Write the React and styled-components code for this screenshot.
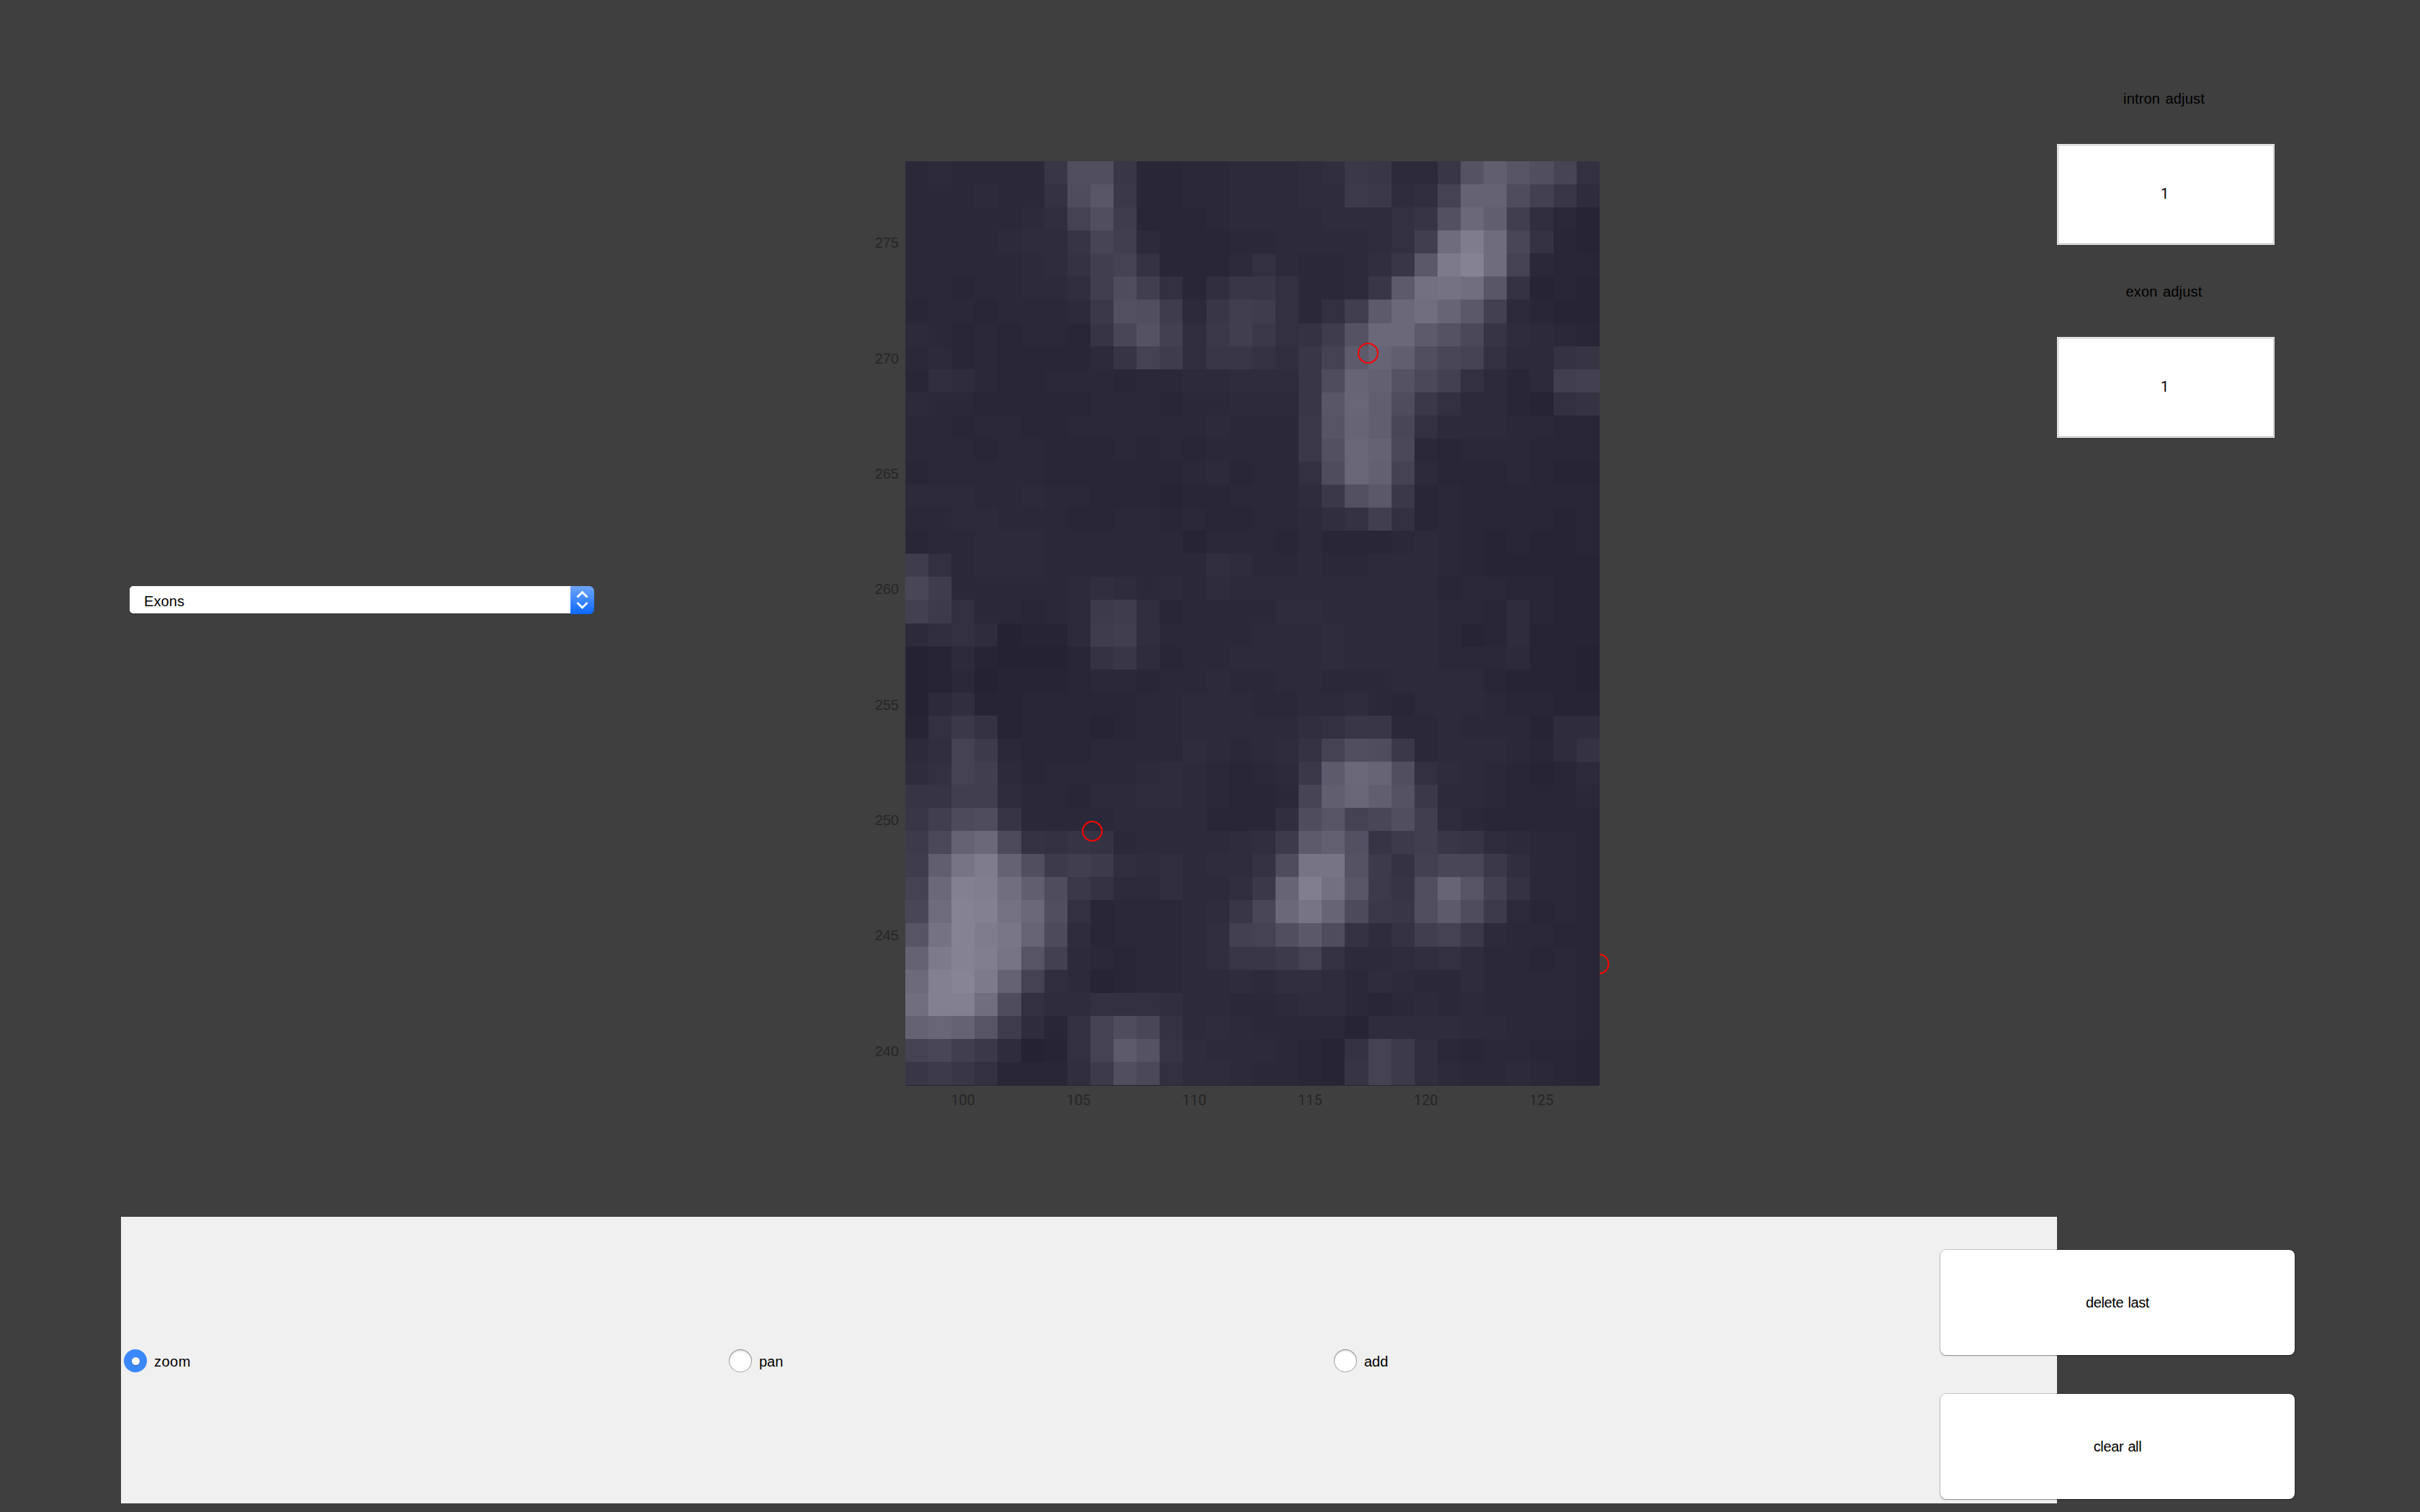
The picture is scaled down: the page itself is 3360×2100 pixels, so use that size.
import React from "react";
import styled, { createGlobalStyle } from "styled-components";

const GlobalStyle = createGlobalStyle`
  *, *::before, *::after { box-sizing: border-box; }
  body { margin: 0; background: #3f3f3f; }
`;

const Page = styled.main`
  display: flex;
  flex-direction: column;
  width: 3360px;
  height: 2100px;
  overflow: hidden;
  background: #3f3f3f;
  color: #000;
  font-family: "Liberation Sans", Arial, sans-serif;
  font-size: 20px;
  line-height: 24px;
`;

const Workspace = styled.section`
  display: flex;
  height: 1690px;
  flex: none;
`;

const SelectorColumn = styled.div`
  width: 1200px;
  flex: none;
  padding: 814px 0 0 180px;
`;

const Dropdown = styled.button`
  display: flex;
  width: 645px;
  height: 39px;
  padding: 0;
  border: 0;
  background: none;
  color: #000;
  font: inherit;
  text-align: left;
`;

const DropdownValue = styled.span`
  flex: 1;
  height: 38px;
  padding: 9px 0 0 20px;
  border-radius: 5px 0 0 5px;
  background: #fff;
  box-shadow: 0 1px 1px rgba(0, 0, 0, 0.35);
  letter-spacing: 0.1px;
`;

const DropdownArrows = styled.span`
  display: flex;
  align-items: center;
  justify-content: center;
  width: 33px;
  height: 39px;
  border-radius: 0 7px 7px 0;
  background: linear-gradient(#6ea5fb, #0b68ff);
`;

const PlotColumn = styled.div`
  display: grid;
  grid-template-columns: 57px 964px;
  grid-template-rows: 1284px auto;
  align-content: start;
  width: 1656px;
  flex: none;
  padding-top: 224px;
  color: #262626;
`;

const YTicks = styled.div`
  display: flex;
  flex-direction: column;
  padding: 33px 9px 0 0;
  height: 1284px;
`;

const YTick = styled.div`
  display: flex;
  align-items: center;
  justify-content: flex-end;
  height: 160.375px;
  flex: none;
`;

const XTicks = styled.div`
  display: flex;
  grid-column: 2;
  padding-top: 8px;
`;

const XTick = styled.div`
  flex: 1;
  padding-right: 1px;
  text-align: center;
  font-family: Roboto, "Liberation Sans", sans-serif;
`;

const PlotSvg = styled.svg`
  display: block;
  overflow: visible;
`;

const AdjustColumn = styled.div`
  display: flex;
  flex-direction: column;
  width: 302px;
  padding-top: 125px;
`;

const AdjustGroup = styled.label`
  display: flex;
  flex-direction: column;
  align-items: stretch;
  gap: 51px;
  margin-bottom: 53px;
`;

const AdjustLabel = styled.span`
  padding-right: 5px;
  text-align: center;
  letter-spacing: 0.18px;
  word-spacing: 1.6px;
  white-space: nowrap;
`;

const AdjustField = styled.span`
  display: flex;
  align-items: center;
  justify-content: center;
  height: 140px;
  padding: 0 3px 2px 0;
  border: 1px solid #fff;
  background: #fff;
  box-shadow: inset 0 0 0 1px #bdbdbd;
  font-family: Roboto, "Liberation Sans", sans-serif;
`;

const ControlBar = styled.section`
  display: flex;
  height: 398px;
  padding-left: 168px;
`;

const ModePanel = styled.div`
  display: flex;
  width: 2688px;
  flex: none;
  padding: 1px 0 0 4px;
  background: #f0f0f0;
`;

const ModeOption = styled.label`
  display: flex;
  align-items: center;
  gap: 10px;
  width: 840px;
  height: 398px;
`;

const Radio = styled.span`
  display: flex;
  align-items: center;
  justify-content: center;
  width: 32px;
  height: 32px;
  border-radius: 50%;
  background: ${(p) => (p.$on ? "#3b88fd" : "#fff")};
  box-shadow: ${(p) =>
    p.$on ? "none" : "inset 0 0 0 1px rgba(0,0,0,.3), inset 0 2px 3px rgba(0,0,0,.2)"};

  &::after {
    content: "";
    display: ${(p) => (p.$on ? "block" : "none")};
    width: 11px;
    height: 11px;
    border-radius: 50%;
    background: #fff;
    box-shadow: 0 1px 2px rgba(0, 0, 0, 0.3);
  }
`;

const ModeText = styled.span`
  padding-top: 2px;
  letter-spacing: ${(p) => p.$track}px;
`;

const Actions = styled.div`
  position: relative;
  display: flex;
  flex-direction: column;
  gap: 54px;
  width: 492px;
  flex: none;
  margin-left: -162px;
  padding-top: 46px;
`;

const ActionButton = styled.button`
  width: 492px;
  height: 146px;
  padding: 0;
  border: 0;
  border-radius: 8px;
  background: #fff;
  color: #000;
  font: inherit;
  letter-spacing: -0.38px;
  word-spacing: 1px;
  box-shadow: 0 0 0 1px rgba(0, 0, 0, 0.16), 0 1px 2px rgba(0, 0, 0, 0.32);
`;

/* Intensity of each sample, one character per sample, top row first. */
const LEVELS = [
  "454444bnnb334455567cb55bpvqni8",
  "4445449mrc334455566dc67hxxmgb6",
  "4444457hne333455556668aoAvf742",
  "4444566aif533344555568fCKCj932",
  "44444569fh93335854457bsJNCh433",
  "44344557fmf837bb8445btEFDr9232",
  "34434445cone5bfe848ftADysg5322",
  "54343443ajpg7cfc89epAAtpka6543",
  "453433335ahe7bb97bhtyvnjh8559a",
  "37643344434455666bmywpkg8535fg",
  "54433333444344555brzvmc8553289",
  "44344334444445444cqyvj85554433",
  "44434433343434444cozxk43444333",
  "344444333333453448mzwh53334322",
  "555445443332334446cosc34333333",
  "44554443344343344579f834333323",
  "344555444444244435333454323223",
  "e84555444444476445445554322222",
  "je4444457645465555555553443322",
  "gd844345de73444466555554436322",
  "57861225ef74444555655554236222",
  "125211139b63445555655554445221",
  "124122234434454455444555532221",
  "157223333344555445564355543322",
  "28c9233323445555578bb445444266",
  "57hd43334444654569hnmc45554369",
  "68hf5344445654345ctAyn86543235",
  "aaff6443556654334ivzvpc5543334",
  "bflma444455553337mqhjnf6433333",
  "dkxAl98a94555567dtwoadfba65443",
  "evGKxndfd7675669mGGpd9gjjc7443",
  "hAMLDvmc9557557cyLErdanyqg9443",
  "jCNMFAn8344456bjAGylcbntmd5343",
  "qFNKHyl6344457ghnsm969fhc54433",
  "xJNLGqg5434457bbdh955678644343",
  "BMOJxh752344556577646544644443",
  "DMMDm8668887554456643454544443",
  "xzxqe638hmj9565444426666554443",
  "hjfc6128htpa65554329hd74344332",
  "bdb83337dnk86654432ahd75445432",
];

const SCALE = "0123456789abcdefghijklmnopqrstuvwxyzABCDEFGHIJKLMNOPQRSTUVWXYZ";
const colEdge = (k) => Math.floor((k * 964) / 30 + 0.38);
const rowEdge = (k) => Math.round((k * 1283) / 40);

/* The slide stain loses blue towards the top right corner. */
function shade(ch, col, row) {
  const g = 32 + 2 * SCALE.indexOf(ch);
  const blue = Math.round(18.4 - 2.6 * (col / 29) * (1 - row / 60));
  return `rgb(${g + 3},${g},${g + blue})`;
}

function Raster() {
  return LEVELS.map((row, y) =>
    Array.from(row, (ch, x) => (
      <rect
        key={`${x}-${y}`}
        x={colEdge(x)}
        y={rowEdge(y)}
        width={colEdge(x + 1) - colEdge(x)}
        height={rowEdge(y + 1) - rowEdge(y)}
        fill={shade(ch, x, y)}
      />
    ))
  );
}

function Plot() {
  return (
    <PlotSvg width="964" height="1284" viewBox="0 0 964 1284">
      <g shapeRendering="crispEdges">
        <Raster />
        <rect x="0" y="1283" width="963" height="1" fill="#262530" />
      </g>
      <clipPath id="outside">
        <rect x="964" y="1080" width="40" height="60" />
      </clipPath>
      <g fill="none" stroke="#f00" strokeWidth="2">
        <circle cx="642.5" cy="266.5" r="13.5" />
        <circle cx="259.6" cy="930.4" r="13.3" />
        <circle cx="963" cy="1114.8" r="13.3" clipPath="url(#outside)" />
      </g>
    </PlotSvg>
  );
}

const Y_LABELS = [275, 270, 265, 260, 255, 250, 245, 240];
const X_LABELS = [100, 105, 110, 115, 120, 125];

const MODES = [
  { name: "zoom", on: true, track: 0.5 },
  { name: "pan", on: false, track: 0 },
  { name: "add", on: false, track: 0 },
];

export default function App() {
  return (
    <>
      <GlobalStyle />
      <Page>
        <Workspace>
          <SelectorColumn>
            <Dropdown>
              <DropdownValue>Exons</DropdownValue>
              <DropdownArrows>
                <svg width="17" height="27" viewBox="0 0 17 27" fill="none" stroke="#fff" strokeWidth="2.8">
                  <path d="M1.5 9.5 8.5 2.5 15.5 9.5M1.5 17 8.5 24 15.5 17" />
                </svg>
              </DropdownArrows>
            </Dropdown>
          </SelectorColumn>
          <PlotColumn>
            <YTicks>
              {Y_LABELS.map((v) => (
                <YTick key={v}>{v}</YTick>
              ))}
            </YTicks>
            <Plot />
            <XTicks>
              {X_LABELS.map((v) => (
                <XTick key={v}>{v}</XTick>
              ))}
            </XTicks>
          </PlotColumn>
          <AdjustColumn>
            {["intron adjust", "exon adjust"].map((name) => (
              <AdjustGroup key={name}>
                <AdjustLabel>{name}</AdjustLabel>
                <AdjustField>1</AdjustField>
              </AdjustGroup>
            ))}
          </AdjustColumn>
        </Workspace>
        <ControlBar>
          <ModePanel>
            {MODES.map((m) => (
              <ModeOption key={m.name}>
                <Radio $on={m.on} />
                <ModeText $track={m.track}>{m.name}</ModeText>
              </ModeOption>
            ))}
          </ModePanel>
          <Actions>
            <ActionButton>delete last</ActionButton>
            <ActionButton>clear all</ActionButton>
          </Actions>
        </ControlBar>
      </Page>
    </>
  );
}
